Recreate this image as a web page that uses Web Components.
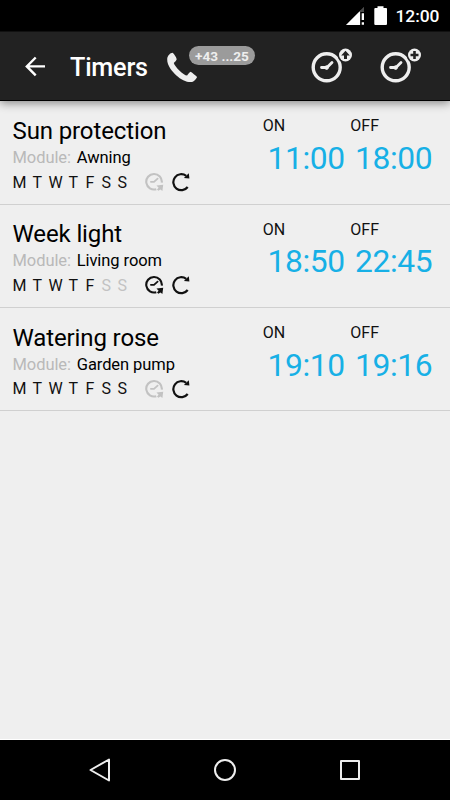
<!DOCTYPE html>
<html lang="en"><head><meta charset="utf-8"><title>Timers</title>
<style>
html,body{margin:0;height:100%}
body{font-family:Roboto,"Liberation Sans",sans-serif;background:#efefef;overflow:hidden}
</style></head><body>
<timer-screen></timer-screen>
<script>
const define=(name,html,setup)=>customElements.define(name,class extends HTMLElement{
  connectedCallback(){
    if(this.shadowRoot)return;
    this.attachShadow({mode:'open'}).innerHTML=html;
    if(setup)setup(this,this.shadowRoot);
  }
});

define('status-bar',`<style>
:host{display:flex;height:31px;background:#000;color:#fff;justify-content:flex-end;box-sizing:border-box;padding-right:10.5px}
svg{display:block}
span{font-size:17.4px;font-weight:500;line-height:20px;margin-top:6px;margin-left:7px;letter-spacing:0}
</style>
<svg width="42" height="31" viewBox="346 0 42 31">
<path d="M364 7V25H346Z" fill="#4b4b4b"/><path d="M360.5 10.5V25H346Z" fill="#fff"/><path d="M360.2 12H364.5V25H360.2Z" fill="#000"/><path d="M364 7V12H359Z" fill="#4b4b4b"/>
<path d="M361.7 13.2H364V20H361.7ZM361.7 22.3H364V24.7H361.7Z" fill="#fff"/>
<path d="M377.5 6.3H383.5V8H386.2Q387 8 387 9V24Q387 25 386 25H375.3Q374.3 25 374.3 24V9Q374.3 8 375.3 8H377.5Z" fill="#fff"/></svg><span>12:00</span>`);

define('call-badge',`<style>
:host{display:block;width:90px;height:70px;position:relative}
svg{display:block}
span{position:absolute;left:24px;top:15px;width:66px;height:19px;border-radius:10px;background:#9b9b9b;color:#eee;font-size:13.6px;font-weight:700;line-height:20.5px;text-align:center}
</style>
<svg width="34" height="70" viewBox="165 31 34 70"><path d="M172.6 52.8C170.5 52.9 167.3 55.6 167.2 59.2C167 65.8 172.6 71.7 176.4 75.4C181 79.6 187.4 82.8 192.1 82C194.2 81.6 196.2 78.7 197.1 77C195.1 75 192.7 73 190.6 71.7C189.1 72.7 188 74.2 187.1 75.6C183.6 75.2 174.4 66.3 173.8 62.9C175.2 61.9 176.2 60.7 176.7 59.3C176 56.7 174.4 54.4 172.6 52.8Z" fill="#eee"/></svg>
<span><slot></slot></span>`);

define('clock-action',`<style>:host{display:block}svg{display:block}</style>
<svg width="42" height="70" viewBox="310 31 42 70" fill="none" stroke="#eee">
<circle cx="326.7" cy="67.3" r="13.5" stroke-width="3.4"/>
<path d="M321.5 67.5H327L332 62.4" stroke-width="2.8" stroke-linecap="round" stroke-linejoin="round"/><circle cx="326.6" cy="67.6" r="1.8" fill="#eee" stroke-width="1"/>
<circle cx="345.5" cy="55" r="8" fill="#222" stroke="none"/><circle cx="345.5" cy="55" r="6.5" fill="#eee" stroke="none"/>
<path id="mark"/></svg>`,(el,r)=>{
  const m=r.getElementById('mark');
  if(el.getAttribute('kind')==='add'){m.setAttribute('d','M345.5 51V59M341.5 55H349.5');m.setAttribute('stroke','#222');m.setAttribute('stroke-width','2.6');}
  else{m.setAttribute('d','M345.5 50.7L349.8 55.4H347V59H344V55.4H341.2Z');m.setAttribute('fill','#222');m.setAttribute('stroke','none');}
});

define('app-bar',`<style>
:host{display:flex;height:70px;box-sizing:border-box;background:#222;border-bottom:1px solid #000;border-top:1px solid #111;padding-left:22px;position:relative;z-index:1;box-shadow:0 2px 9px rgba(0,0,0,.45)}
svg{display:block;flex:none;margin-top:-1px}
h1{margin:0 0 0 22px;width:97px;flex:none;font-size:25.2px;font-weight:500;line-height:71px;color:#fff;letter-spacing:-.2px;white-space:nowrap}
h1{padding-left:2px;box-sizing:border-box}
call-badge,clock-action{margin-top:-1px;flex:none}
.up{margin-left:55px}.add{margin-left:27px}
</style>
<svg width="24" height="70" viewBox="22 31 24 70"><path d="M45 66.4H27.5M35.7 57.5L26.8 66.4L35.7 75.3" fill="none" stroke="#fff" stroke-width="2.4"/></svg>
<h1>Timers</h1><call-badge>+43 ...25</call-badge>
<clock-action class="up" kind="upload"></clock-action><clock-action class="add" kind="add"></clock-action>`);

define('clock-loop',`<style>:host{display:block}svg{display:block}</style>
<svg width="19" height="20" viewBox="0 0 19 20" fill="none" stroke="currentColor" stroke-width="2.1">
<path d="M11.3 17.2A7.8 7.8 0 1 1 16.8 10.6"/><path d="M5.9 9.8H9L12.6 6.6" stroke-width="1.8" stroke-linecap="round"/><path d="M11.5 13.6L18.2 12.8L17.4 19L15.5 17.4L13.4 18.8L12 17.4L13.6 15.7Z" fill="currentColor" stroke="none"/></svg>`);
define('repeat-arrow',`<style>:host{display:block}svg{display:block}</style>
<svg width="19" height="20" viewBox="0 0 19 20" fill="none" stroke="currentColor" stroke-width="2.2">
<path d="M15.7 15A8 8 0 1 1 14.2 3.8"/><path d="M16.8 1.2L17.4 6.4L11.9 6.1Z" fill="currentColor" stroke="none"/></svg>`);

define('timer-row',`<style>
:host{display:flex;height:103.3px;box-sizing:border-box;border-bottom:1px solid #d0d0d0;padding-left:12.5px;color:#111}
.info{width:250.3px}
h2{margin:13.6px 0 0;font-size:24px;font-weight:400;line-height:32px;letter-spacing:-.12px;color:#000}
.module{display:flex;gap:5.8px;font-size:16.5px;line-height:22.9px;color:#000;letter-spacing:-.08px}
.module b{font-weight:400;color:#b9b9b9}
.days{display:flex;height:26px;align-items:center;font-size:16px;margin-top:-.9px}
.days span{width:16px;flex:none}
.days span:nth-child(1){width:20px}.days span:nth-child(3){width:20px}.days span:nth-child(4){width:17px}
.days .dim,.dim{color:#c2c2c2}
clock-loop{margin-left:11.5px}repeat-arrow{margin-left:8px}
.time{width:87.5px}
.time small{display:block;margin-top:14.8px;line-height:20px;font-size:16px;color:#111}
.time strong{display:block;margin:5.8px 0 0 4.6px;line-height:32px;font-size:31.8px;font-weight:400;letter-spacing:-.35px;color:#17b0e6;white-space:nowrap}
</style>
<div class="info"><h2><slot></slot></h2><div class="module"><b>Module:</b><span id="m"></span></div>
<div class="days"></div></div>
<div class="time"><small>ON</small><strong id="on"></strong></div><div class="time"><small>OFF</small><strong id="off"></strong></div>`,(el,r)=>{
  r.getElementById('m').textContent=el.getAttribute('module');
  r.getElementById('on').textContent=el.getAttribute('on');
  r.getElementById('off').textContent=el.getAttribute('off');
  const n=+el.getAttribute('days'),d=r.querySelector('.days');
  d.innerHTML=[...'MTWTFSS'].map((x,i)=>`<span class="${i<n?'':'dim'}">${x}</span>`).join('')+`<clock-loop class="${el.hasAttribute('random')?'':'dim'}"></clock-loop><repeat-arrow></repeat-arrow>`;
});

define('nav-bar',`<style>:host{display:block;height:60px;background:#000}svg{display:block}</style>
<svg width="450" height="60" viewBox="0 740 450 60" fill="none" stroke="#eee" stroke-width="2" stroke-linejoin="round">
<path d="M109 759.5V780.5L90.5 770Z"/><circle cx="225" cy="770" r="10"/><rect x="341" y="761" width="18" height="18"/></svg>`);

define('timer-screen',`<style>:host{display:flex;flex-direction:column;width:450px;height:800px;background:#efefef}
main{flex:1;border-bottom:1px solid #fff;padding-top:.55px}</style>
<status-bar></status-bar><app-bar></app-bar>
<main><timer-row module="Awning" on="11:00" off="18:00" days="7">Sun protection</timer-row>
<timer-row module="Living room" on="18:50" off="22:45" days="5" random>Week light</timer-row>
<timer-row module="Garden pump" on="19:10" off="19:16" days="7">Watering rose</timer-row></main>
<nav-bar></nav-bar>`);
</script></body></html>
